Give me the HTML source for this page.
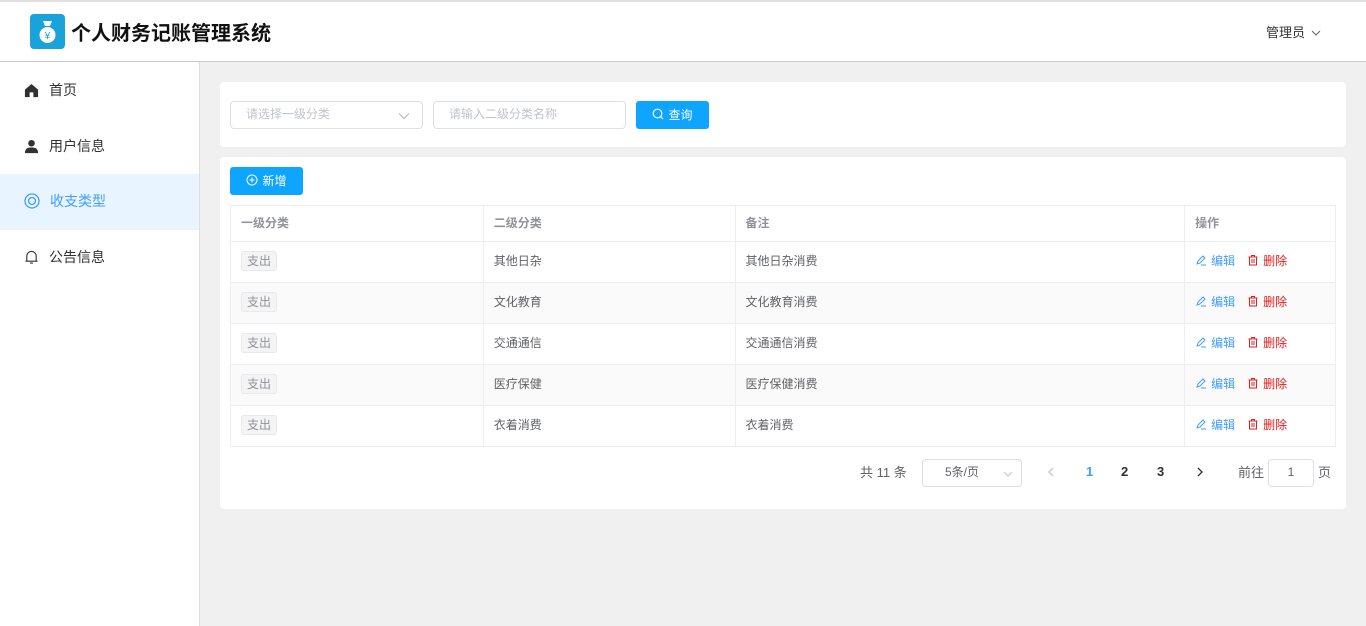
<!DOCTYPE html>
<html><head><meta charset="utf-8"><style>
*{box-sizing:border-box;margin:0;padding:0}
body{width:1366px;height:626px;overflow:hidden;font-family:"Liberation Sans","Noto Sans CJK SC",sans-serif;font-size:13px;color:#606266;background:#f0f0f0;position:relative}
.abs{position:absolute}
.header{left:0;top:0;width:1366px;height:62px;background:#fff;border-top:2px solid #e0e0e0;border-bottom:1px solid #ccc}
.side{left:0;top:62px;width:200px;height:564px;background:#fff;border-right:1px solid #ddd}
.mi{position:absolute;left:0;width:199px;height:56px;display:flex;align-items:center;padding-left:24px;font-size:14px;color:#303133;padding-bottom:2px}
.mi svg{margin-right:10px}
.card{background:#fff;border-radius:4px}
.inp{border:1px solid #dcdfe6;border-radius:4px;height:28px;font-size:12px;color:#c0c4cc;padding-left:15px;line-height:24px}
.btn{background:#0ea5ff;color:#fff;border-radius:3px;height:28px;font-size:12px;display:flex;align-items:center;justify-content:center;padding-bottom:2px}
.btn svg{margin-right:4px}
table{border-collapse:collapse;position:absolute;left:230px;top:205px;width:1106px;font-size:12px}
td{border:1px solid #ebeef5;height:41px;padding-left:10px;color:#606266;padding-bottom:3px}
tr.h td{height:36px;color:#909399;font-weight:bold}
tr.s td{background:#fafafa}
.tag{display:inline-block;background:#f4f4f5;border:1px solid #e9e9eb;color:#909399;border-radius:3px;padding:0 5px;height:20px;line-height:18px;font-size:12px}
.ed{color:#409eff}.de{color:#e0201e;margin-left:12px}
.ed svg,.de svg{vertical-align:-1px;margin-right:4px}
</style></head><body>
<div class="abs header">
 <div class="abs" style="left:30px;top:12px;width:35px;height:35px;background:#1aa3d9;border-radius:4px">
  <svg width="35" height="35" viewBox="0 0 35 35"><path d="M13 7h9l-2 5h-5z" fill="#fff"/><ellipse cx="17.5" cy="21" rx="8" ry="8" fill="#fff"/><text x="17.5" y="25" font-size="10" text-anchor="middle" fill="#1aa3d9" font-family="Liberation Sans">¥</text></svg>
 </div>
 <div class="abs" style="left:71px;top:15px;font-size:20px;font-weight:bold;color:#111">个人财务记账管理系统</div>
 <div class="abs" style="left:1266px;top:20px;font-size:13px;color:#333">管理员 <svg width="10" height="8" viewBox="0 0 10 8" style="margin-left:2px"><path d="M1 2l4 4 4-4" fill="none" stroke="#666" stroke-width="1"/></svg></div>
</div>
<div class="abs side">
 <div class="mi" style="top:1px"><svg width="15" height="15" viewBox="0 0 16 16"><path d="M8 1L1 7v8h5v-5h4v5h5V7z" fill="#303133"/></svg>首页</div>
 <div class="mi" style="top:57px"><svg width="15" height="15" viewBox="0 0 16 16"><circle cx="8" cy="4.5" r="3.5" fill="#303133"/><path d="M1 15c0-5 3-6 7-6s7 1 7 6z" fill="#303133"/></svg>用户信息</div>
 <div class="mi" style="top:112px;background:#e8f4ff;color:#409eff"><svg width="16" height="16" viewBox="0 0 16 16" fill="none" stroke="#409eff" stroke-width="1.3"><circle cx="8" cy="8" r="7"/><circle cx="8" cy="8" r="3.5"/></svg>收支类型</div>
 <div class="mi" style="top:168px"><svg width="15" height="16" viewBox="0 0 16 16" fill="none" stroke="#303133" stroke-width="1.2"><path d="M3 12V7a5 5 0 0110 0v5M1.5 12.5h13M6.5 14.5h3"/></svg>公告信息</div>
</div>
<div class="abs card" style="left:220px;top:82px;width:1126px;height:65px"></div>
<div class="abs inp" style="left:230px;top:101px;width:193px">请选择一级分类<svg class="abs" style="right:12px;top:10px" width="12" height="8" viewBox="0 0 12 8"><path d="M1 1.5l5 5 5-5" fill="none" stroke="#b0b3b8" stroke-width="1"/></svg></div>
<div class="abs inp" style="left:433px;top:101px;width:193px">请输入二级分类名称</div>
<div class="abs btn" style="left:636px;top:101px;width:73px"><svg width="12" height="12" viewBox="0 0 12 12" fill="none" stroke="#fff" stroke-width="1.2"><circle cx="5.5" cy="5.5" r="4.3"/><path d="M8.7 8.7l2.3 2.3"/></svg>查询</div>
<div class="abs card" style="left:220px;top:157px;width:1126px;height:352px"></div>
<div class="abs btn" style="left:230px;top:167px;width:73px"><svg width="12" height="12" viewBox="0 0 12 12" fill="none" stroke="#fff" stroke-width="1"><circle cx="6" cy="6" r="5"/><path d="M6 3.5v5M3.5 6h5"/></svg>新增</div>
<table>
<colgroup><col style="width:253px"><col style="width:252px"><col style="width:450px"><col style="width:151px"></colgroup>
<tr class="h"><td>一级分类</td><td>二级分类</td><td>备注</td><td>操作</td></tr>
<tr><td><span class="tag">支出</span></td><td>其他日杂</td><td>其他日杂消费</td><td><span class="ed"><svg width="12" height="12" viewBox="0 0 12 12" fill="none" stroke="#409eff"><path d="M2 10l1-3 5-5 2 2-5 5zM6 11h5"/></svg>编辑</span><span class="de"><svg width="12" height="12" viewBox="0 0 12 12" fill="none" stroke="#e0201e"><path d="M1.5 3h9M4.5 3V1.5h3V3M2.5 3v8h7V3M5 5v4M7 5v4"/></svg>删除</span></td></tr>
<tr class="s"><td><span class="tag">支出</span></td><td>文化教育</td><td>文化教育消费</td><td><span class="ed"><svg width="12" height="12" viewBox="0 0 12 12" fill="none" stroke="#409eff"><path d="M2 10l1-3 5-5 2 2-5 5zM6 11h5"/></svg>编辑</span><span class="de"><svg width="12" height="12" viewBox="0 0 12 12" fill="none" stroke="#e0201e"><path d="M1.5 3h9M4.5 3V1.5h3V3M2.5 3v8h7V3M5 5v4M7 5v4"/></svg>删除</span></td></tr>
<tr><td><span class="tag">支出</span></td><td>交通通信</td><td>交通通信消费</td><td><span class="ed"><svg width="12" height="12" viewBox="0 0 12 12" fill="none" stroke="#409eff"><path d="M2 10l1-3 5-5 2 2-5 5zM6 11h5"/></svg>编辑</span><span class="de"><svg width="12" height="12" viewBox="0 0 12 12" fill="none" stroke="#e0201e"><path d="M1.5 3h9M4.5 3V1.5h3V3M2.5 3v8h7V3M5 5v4M7 5v4"/></svg>删除</span></td></tr>
<tr class="s"><td><span class="tag">支出</span></td><td>医疗保健</td><td>医疗保健消费</td><td><span class="ed"><svg width="12" height="12" viewBox="0 0 12 12" fill="none" stroke="#409eff"><path d="M2 10l1-3 5-5 2 2-5 5zM6 11h5"/></svg>编辑</span><span class="de"><svg width="12" height="12" viewBox="0 0 12 12" fill="none" stroke="#e0201e"><path d="M1.5 3h9M4.5 3V1.5h3V3M2.5 3v8h7V3M5 5v4M7 5v4"/></svg>删除</span></td></tr>
<tr><td><span class="tag">支出</span></td><td>衣着消费</td><td>衣着消费</td><td><span class="ed"><svg width="12" height="12" viewBox="0 0 12 12" fill="none" stroke="#409eff"><path d="M2 10l1-3 5-5 2 2-5 5zM6 11h5"/></svg>编辑</span><span class="de"><svg width="12" height="12" viewBox="0 0 12 12" fill="none" stroke="#e0201e"><path d="M1.5 3h9M4.5 3V1.5h3V3M2.5 3v8h7V3M5 5v4M7 5v4"/></svg>删除</span></td></tr>
</table>
<div class="abs" style="left:860px;top:462px;color:#606266">共 11 条</div>
<div class="abs inp" style="left:922px;top:459px;width:100px;color:#606266;padding-left:22px">5条/页<svg class="abs" style="right:8px;top:11px" width="10" height="6" viewBox="0 0 10 6"><path d="M1 1l4 4 4-4" fill="none" stroke="#c0c4cc"/></svg></div>
<svg class="abs" style="left:1047px;top:467px" width="8" height="10" viewBox="0 0 8 10"><path d="M6 1L2 5l4 4" fill="none" stroke="#c0c4cc" stroke-width="1.3"/></svg>
<div class="abs" style="left:1086px;top:464px;color:#409eff;font-weight:bold">1</div>
<div class="abs" style="left:1121px;top:464px;color:#303133;font-weight:bold">2</div>
<div class="abs" style="left:1157px;top:464px;color:#303133;font-weight:bold">3</div>
<svg class="abs" style="left:1196px;top:467px" width="8" height="10" viewBox="0 0 8 10"><path d="M2 1l4 4-4 4" fill="none" stroke="#303133" stroke-width="1.3"/></svg>
<div class="abs" style="left:1238px;top:462px">前往</div>
<div class="abs inp" style="left:1268px;top:459px;width:46px;color:#606266;padding:0;text-align:center">1</div>
<div class="abs" style="left:1318px;top:462px">页</div>
</body></html>
